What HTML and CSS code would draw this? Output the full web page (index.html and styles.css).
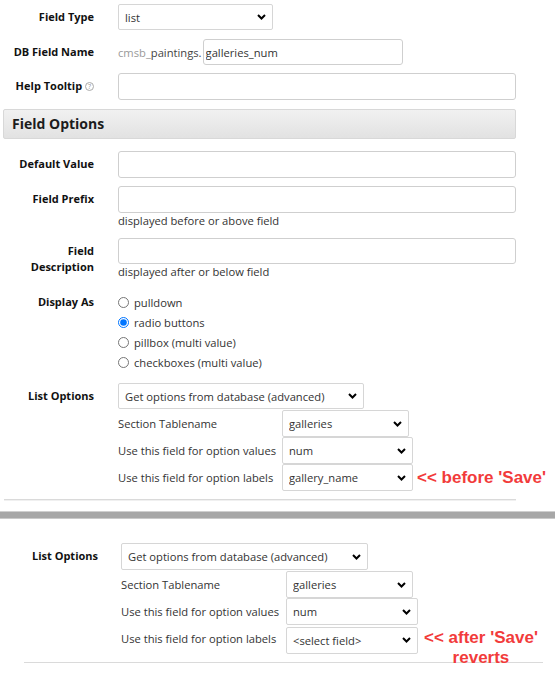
FILE: index.html
```html
<!DOCTYPE html>
<html lang="en">
<head>
<meta charset="utf-8">
<title>Field Editor</title>
<link rel="stylesheet" href="styles.css">
</head>
<body>
<div class="form">
  <div class="row row-type">
    <div class="lbl">Field Type</div>
    <div class="ctl"><select class="sel sel-type"><option>list</option></select></div>
  </div>
  <div class="row row-db">
    <div class="lbl">DB Field Name</div>
    <div class="ctl db"><span class="prefix-gray">cmsb_</span><span class="prefix-dark">paintings.</span><input class="txt txt-db" type="text" value="galleries_num"></div>
  </div>
  <div class="row row-help">
    <div class="lbl">Help Tooltip <span class="qmark">?</span></div>
    <div class="ctl"><input class="txt txt-wide" type="text"></div>
  </div>

  <div class="section-head">Field Options</div>

  <div class="row row-default">
    <div class="lbl">Default Value</div>
    <div class="ctl"><input class="txt txt-wide" type="text"></div>
  </div>
  <div class="row row-prefix">
    <div class="lbl">Field Prefix</div>
    <div class="ctl">
      <input class="txt txt-wide" type="text">
      <div class="hint">displayed before or above field</div>
    </div>
  </div>
  <div class="row row-desc">
    <div class="lbl">Field<br>Description</div>
    <div class="ctl">
      <input class="txt txt-wide txt-short" type="text">
      <div class="hint">displayed after or below field</div>
    </div>
  </div>
  <div class="row row-display">
    <div class="lbl lbl-radio">Display As</div>
    <div class="ctl radios">
      <label class="radio"><input type="radio" name="disp"> pulldown</label>
      <label class="radio"><input type="radio" name="disp" checked> radio buttons</label>
      <label class="radio"><input type="radio" name="disp"> pillbox (multi value)</label>
      <label class="radio"><input type="radio" name="disp"> checkboxes (multi value)</label>
    </div>
  </div>
  <div class="row row-list">
    <div class="lbl lbl-list">List Options</div>
    <div class="ctl">
      <select class="sel sel-source"><option>Get options from database (advanced)</option></select>
      <div class="subgrid">
        <div class="sublbl">Section Tablename</div>
        <div class="subctl"><select class="sel sel-sub sel-table"><option>galleries</option></select></div>
        <div class="sublbl">Use this field for option values</div>
        <div class="subctl"><select class="sel sel-sub sel-field"><option>num</option></select></div>
        <div class="sublbl">Use this field for option labels</div>
        <div class="subctl"><select class="sel sel-sub sel-field"><option>gallery_name</option></select><span class="note">&lt;&lt; before 'Save'</span></div>
      </div>
    </div>
  </div>
  <div class="rule"></div>
</div>

<div class="divider"></div>

<div class="form form-after">
  <div class="row row-list-after">
    <div class="lbl lbl-list">List Options</div>
    <div class="ctl">
      <select class="sel sel-source"><option>Get options from database (advanced)</option></select>
      <div class="subgrid">
        <div class="sublbl">Section Tablename</div>
        <div class="subctl"><select class="sel sel-sub sel-table"><option>galleries</option></select></div>
        <div class="sublbl">Use this field for option values</div>
        <div class="subctl"><select class="sel sel-sub sel-field"><option>num</option></select></div>
        <div class="sublbl">Use this field for option labels</div>
        <div class="subctl"><select class="sel sel-sub sel-field"><option>&lt;select field&gt;</option></select><span class="note note-two">&lt;&lt; after 'Save'<br>reverts</span></div>
      </div>
    </div>
  </div>
  <div class="rule rule-after"></div>
</div>
</body>
</html>
```

FILE: styles.css
```css
* { box-sizing: border-box; }

body {
  margin: 0;
  background: #fff;
  color: #222;
  font-family: "Open Sans", "DejaVu Sans", sans-serif;
  font-size: 11.2px;
}

/* label column + control column */
.row {
  display: grid;
  grid-template-columns: 94px 1fr;
  column-gap: 24px;
  align-items: start;
}

.lbl {
  text-align: right;
  font-weight: 700;
  font-size: 11px;
  line-height: 16px;
  color: #111;
  padding-top: 5px;
}

.ctl { min-width: 0; }

/* vertical rhythm */
.row-type { margin-top: 4px; }
.row-db { margin-top: 9px; }
.row-help { margin-top: 8px; }
.row-default { margin-top: 12px; }
.row-prefix { margin-top: 8px; }
.row-desc { margin-top: 9px; }
.row-display { margin-top: 12px; }
.row-list { margin-top: 11px; }

/* text inputs */
.txt {
  display: block;
  height: 27px;
  border: 1px solid #cfcfcf;
  border-radius: 3px;
  background: #fff;
  font-family: inherit;
  font-size: 11.2px;
  color: #333;
  padding: 0 5px;
  margin: 0;
  outline: none;
}
.txt-wide { width: 398px; }
.txt-short { height: 26px; }

.db {
  display: flex;
  align-items: center;
  height: 26px;
  font-size: 11.2px;
}
.prefix-gray { color: #9a9a9a; }
.prefix-dark { color: #444; }
.txt-db {
  width: 200px;
  height: 26px;
  margin-left: 1px;
  padding-left: 2px;
}

.qmark {
  display: inline-block;
  width: 9px;
  height: 9px;
  border: 1px solid #aaa;
  border-radius: 50%;
  font-size: 7px;
  line-height: 7px;
  font-weight: 400;
  color: #999;
  text-align: center;
  vertical-align: 1px;
}

/* selects with a drawn chevron */
.sel {
  display: block;
  appearance: none;
  -webkit-appearance: none;
  height: 26px;
  margin: 0;
  border: 1px solid #d6d6d6;
  border-radius: 2px;
  background: #fff url("data:image/svg+xml;utf8,<svg xmlns='http://www.w3.org/2000/svg' width='9' height='6' viewBox='0 0 9 6'><path d='M1 1 L4.5 4.5 L8 1' fill='none' stroke='black' stroke-width='2'/></svg>") no-repeat right 6px center;
  font-family: inherit;
  font-size: 11.2px;
  color: #333;
  padding: 0 20px 0 6px;
  outline: none;
}
.sel-type { width: 155px; }
.sel-source { width: 246px; }
.sel-sub { height: 27px; }
.sel-table { width: 127px; }
.sel-field { width: 131px; }

/* section heading bar */
.section-head {
  margin: 9px 0 0 3px;
  width: 513px;
  height: 30px;
  border: 1px solid #d8d8d8;
  border-radius: 2px;
  background: linear-gradient(#f1f1f1, #e2e2e2);
  font-weight: 700;
  font-size: 14px;
  line-height: 28px;
  padding-left: 8px;
  color: #1c1c1c;
}

.hint {
  font-size: 11.2px;
  line-height: 16px;
  color: #333;
}

/* radio list */
.lbl-radio { padding-top: 2px; }
.radios { display: flex; flex-direction: column; }
.radio {
  display: flex;
  align-items: center;
  height: 20px;
  font-size: 11.2px;
  color: #333;
}
.radio input {
  width: 11px;
  height: 11px;
  margin: 0 5px 0 0;
}

/* list options sub table */
.lbl-list { padding-top: 5px; }
.subgrid {
  display: grid;
  grid-template-columns: 164px auto;
  margin-top: 1px;
}
.sublbl {
  height: 27px;
  line-height: 27px;
  font-size: 11.2px;
  color: #333;
  white-space: nowrap;
}
.subctl {
  display: flex;
  align-items: center;
}

.note {
  margin-left: 4px;
  font-family: "Liberation Sans", Arial, sans-serif;
  font-weight: 700;
  font-size: 17px;
  color: #f23b3b;
  white-space: nowrap;
}
.note-two {
  align-self: flex-start;
  margin-left: 6px;
  margin-top: 3px;
  line-height: 20px;
  text-align: center;
  height: 27px;
  overflow: visible;
}

.rule {
  margin: 8px 0 0 4px;
  width: 512px;
  height: 2px;
  border-top: 1px solid #dadada;
  border-bottom: 1px solid #f0f0f0;
}

.divider {
  margin-top: 10px;
  height: 8px;
  background: #a7a7a7;
  border-top: 1px solid #cfcfcf;
  border-bottom: 1px solid #c9c9c9;
}

/* second copy of the list options block */
.form-after .row {
  grid-template-columns: 98px 1fr;
  column-gap: 23px;
}
.row-list-after { margin-top: 24px; }
.form-after .sel-source { width: 247px; height: 27px; }
.form-after .subgrid { grid-template-columns: 165px auto; }
.form-after .sel-field { width: 132px; }
.rule-after {
  margin: 7px 0 0 24px;
  width: 519px;
  height: 1px;
  border-bottom: none;
}
```
